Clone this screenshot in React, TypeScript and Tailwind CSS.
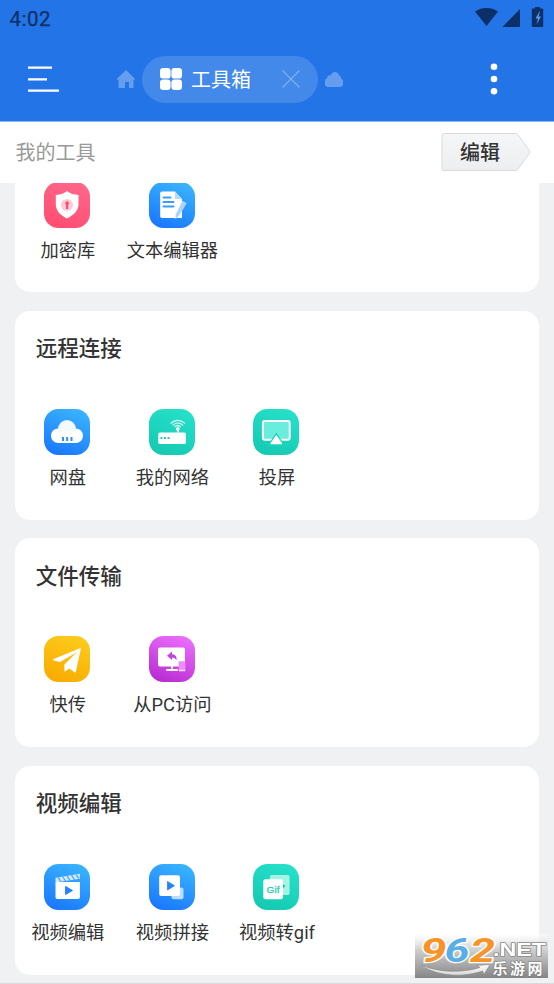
import type { ReactNode } from "react";

type IconName =
  | "vault" | "editor" | "drive" | "network" | "cast"
  | "send" | "pc" | "clip" | "join" | "gif";

const PALETTE: Record<string, [string, string]> = {
  blue: ["#39b3ff", "#1a78ff"],
  pink: ["#ff668a", "#ff4e72"],
  teal: ["#26e0ca", "#15c9b2"],
  yellow: ["#fccb1c", "#f9ab00"],
  purple: ["#ea6dfa", "#b82dd2"],
};

const ICONS: Record<IconName, { tone: string; art: ReactNode }> = {
  vault: {
    tone: "pink",
    art: (
      <>
        <path d="M23 9c3.600 2.800 6.600 3.700 11.500 3.900V22c0 6-3.500 10.300-11.500 14.500C15 32.300 11.800 28 11.800 22v-9.100C16.500 12.700 19.400 11.800 23 9z" fill="#fff" />
        <circle cx="23" cy="23" r="6" fill="#ffc9d6" />
        <path d="M22 27v-4.200a1.900 1.900 0 1 1 2.200 0V27z" fill="#f7507a" />
      </>
    ),
  },
  editor: {
    tone: "blue",
    art: (
      <>
        <path d="M13 9.500h13l7 7.500v19H13a1.800 1.800 0 0 1-1.800-1.800V11.300A1.800 1.800 0 0 1 13 9.500z" fill="#fff" />
        <path d="M26 9.500l7 7.500h-7z" fill="#b4daff" />
        <path d="M14.500 15.500h7M14.500 20h10M14.500 24.500h10" stroke="#3d9bf8" strokeWidth="2" strokeLinecap="round" />
        <path d="M33.200 19.200l4 2-7.600 13.200-3.200 2.100.2-4z" fill="#a7d2ff" stroke="#e4f2ff" strokeWidth=".5" />
      </>
    ),
  },
  drive: {
    tone: "blue",
    art: (
      <>
        <circle cx="23" cy="20" r="9" fill="#d9efff" />
        <rect x="7" y="19.500" width="32" height="14.500" rx="7.250" fill="#fff" />
        <path d="M14.200 22c.3-6.800 3.900-10.500 8.800-10.500S31.600 15 32 22z" fill="#f2faff" />
        <path d="M19 28v4M23.200 28v4M27.500 28v4" stroke="#2e90fc" strokeWidth="2" />
      </>
    ),
  },
  network: {
    tone: "teal",
    art: (
      <>
        <rect x="9.300" y="23.400" width="27.600" height="11.600" rx="1.500" fill="#fff" />
        <path d="M29 17.500v6" stroke="#fff" strokeWidth="1.800" />
        <rect x="27" y="18.500" width="3.500" height="3" rx="1" fill="#fff" />
        <path d="M11.500 29h2M15 29h2M18.500 29h2" stroke="#24cbb5" strokeWidth="1.800" />
        <path d="M22 14.200c4-3.900 9.700-3.900 13.500 0M24 16c2.900-2.600 6.800-2.600 9.600 0M26 17.700c1.600-1.400 3.900-1.400 5.500 0" fill="none" stroke="#d9fff7" strokeWidth="1.200" strokeLinecap="round" />
      </>
    ),
  },
  cast: {
    tone: "teal",
    art: (
      <>
        <rect x="9.900" y="12" width="26.800" height="18.800" rx="2" fill="#69eddd" stroke="#fff" strokeWidth="2" />
        <path d="M23.300 23.500L32 36.500H14.600z" fill="#20d3bd" />
        <path d="M23.300 27.200l5 7.300H18.300z" fill="#fff" stroke="#fff" strokeWidth="1.500" strokeLinejoin="round" />
      </>
    ),
  },
  send: {
    tone: "yellow",
    art: (
      <path d="M36 12.200c.6-.2 1 .2.800.8L31.900 35.600c-.1.800-.9 1-1.500.6l-5.100-3.600-3.800 2.700c-.6.4-1.100.1-1.100-.6v-6.300l12.400-12.100L16 25.900l-6.300-1.400c-.9-.3-.9-1.200 0-1.600z" fill="#fff" />
    ),
  },
  pc: {
    tone: "purple",
    art: (
      <>
        <rect x="9" y="11.500" width="27" height="19" rx="2" fill="#fff" />
        <path d="M23 30v3.500M18 34h10" stroke="#fff" strokeWidth="2" strokeLinecap="round" />
        <path d="M18 19.800l5-4.200v2.700c3.200 0 5 2.200 4.500 5.700-1.200-1.700-2.500-2.200-4.500-2.200V24z" fill="#bf45dc" />
        <rect x="29.600" y="25.300" width="6.800" height="10.200" rx=".8" fill="#ed8cfa" />
        <path d="M30 34.300h6" stroke="#fff" strokeWidth="1.300" strokeDasharray="1.600 .6" />
      </>
    ),
  },
  clip: {
    tone: "blue",
    art: (
      <>
        <path d="M11.500 18h24.400v15.200a1.700 1.700 0 0 1-1.700 1.700h-21a1.700 1.700 0 0 1-1.700-1.700z" fill="#fff" />
        <path d="M11.500 18.300V13.700l24.400-3.900v5L12.500 18.300" fill="#d2eaff" />
        <path d="M14 13.200l3 4.500M18.500 12.500l3 4.500M23 11.800l3 4.500M27.500 11.100l3 4.500M32 10.400l2.700 4" stroke="#4ba8ff" strokeWidth="1.300" />
        <path d="M21.600 22.500l6.800 4-6.800 4z" fill="#2185fc" stroke="#2185fc" strokeWidth="1" strokeLinejoin="round" />
      </>
    ),
  },
  join: {
    tone: "blue",
    art: (
      <>
        <rect x="22.500" y="23.500" width="12" height="11.700" rx="2" fill="#b9deff" />
        <rect x="10.200" y="11.200" width="20.800" height="20.800" rx="2" fill="#fff" />
        <path d="M18.500 17.500l7 4.200-7 4.300z" fill="#2383f5" stroke="#2383f5" strokeWidth=".8" strokeLinejoin="round" />
      </>
    ),
  },
  gif: {
    tone: "teal",
    art: (
      <>
        <rect x="16.800" y="11" width="19.800" height="20" rx="2" fill="#a5f3e5" />
        <path d="M29.700 20l2.800 2-2.800 2.400z" fill="#21bfaa" />
        <rect x="10.300" y="15.200" width="19.600" height="20" rx="2" fill="#fff" />
        <text x="13.500" y="28.500" fontSize="9.500" textLength="13" lengthAdjust="spacingAndGlyphs" fontFamily="'Liberation Sans', Arial, sans-serif" fill="#2dccb7" stroke="#2dccb7" strokeWidth=".3">Gif</text>
      </>
    ),
  },
};

function ToolIcon({ name }: { name: IconName }) {
  const { tone, art } = ICONS[name];
  const [from, to] = PALETTE[tone];
  const id = `bg-${name}`;
  return (
    <svg viewBox="0 0 46 46" className="block size-[46px] shrink-0">
      <defs>
        <linearGradient id={id} x1=".7" y1="0" x2=".3" y2="1">
          <stop offset="0" stopColor={from} />
          <stop offset="1" stopColor={to} />
        </linearGradient>
      </defs>
      <rect width="46" height="46" rx="14.500" fill={`url(#${id})`} />
      {art}
    </svg>
  );
}

type Tool = { icon: IconName; label: string };

function ToolGrid({ tools }: { tools: Tool[] }) {
  return (
    <div className="grid w-[523px] grid-cols-5">
      {tools.map((t) => (
        <div key={t.icon} className="flex flex-col items-center">
          <ToolIcon name={t.icon} />
          <span className="mt-[9px] pl-[1px] text-[18.3px] leading-7 whitespace-nowrap text-[#333]">{t.label}</span>
        </div>
      ))}
    </div>
  );
}

const SECTIONS: { title: string; tools: Tool[] }[] = [
  { title: "远程连接", tools: [{ icon: "drive", label: "网盘" }, { icon: "network", label: "我的网络" }, { icon: "cast", label: "投屏" }] },
  { title: "文件传输", tools: [{ icon: "send", label: "快传" }, { icon: "pc", label: "从PC访问" }] },
  { title: "视频编辑", tools: [{ icon: "clip", label: "视频编辑" }, { icon: "join", label: "视频拼接" }, { icon: "gif", label: "视频转gif" }] },
];

function StatusBar() {
  return (
    <div className="flex h-[38px] items-center justify-between pr-[9px] pl-[9.500px] text-[#0b2f66]">
      <span className="text-[20.500px] tracking-[.5px] [-webkit-text-stroke:.25px_#0b2f66]">4:02</span>
      <svg viewBox="0 0 70 22" className="mb-[2px] h-[22px] w-[70px]" fill="currentColor">
        <path d="M0 4.500c7-4.600 16-4.600 23 0L11.500 19z" />
        <path d="M45 2v18H27.500z" />
        <path d="M60 1.500V0h5v1.500h2.200c.6 0 1 .4 1 1V19c0 .6-.4 1-1 1h-9.400c-.6 0-1-.4-1-1V2.500c0-.6.400-1 1-1z" />
        <path d="M64.500 4.500l-4 7h2.500l-1.500 6 4.500-8h-2.500l1.500-5z" fill="#5b98f0" />
      </svg>
    </div>
  );
}

function TabBar() {
  return (
    <div className="flex h-[82px] items-center pl-7">
      <svg viewBox="0 0 31 28" className="h-7 w-[31px]" stroke="#fff" strokeWidth="2.200">
        <path d="M0 2.600h24M0 14.400h19M0 25.700h31" />
      </svg>
      <svg viewBox="0 0 18 18" className="ml-[58px] size-[18px]" fill="#659def">
        <path d="M9 0l9 8.700v1h-1.500V18h-4.500v-6H8v6H1.500V9.700H0v-1z" />
      </svg>
      <div className="ml-[7px] flex h-[47px] w-[176px] items-center rounded-full bg-[#4389e9] pr-[18px] pl-[18px]">
        <svg viewBox="0 0 22 22" className="size-[22px]" fill="#fff">
          <rect width="10.600" height="10.600" rx="3.200" />
          <rect x="11.400" width="10.600" height="10.600" rx="3.200" />
          <rect y="11.400" width="10.600" height="10.600" rx="3.200" />
          <rect x="11.400" y="11.400" width="10.600" height="10.600" rx="3.200" />
        </svg>
        <span className="ml-[9px] pt-[2px] text-[20px] leading-7 text-white">工具箱</span>
        <svg viewBox="0 0 18 18" className="ml-auto size-[18px]" stroke="#82b3f4" strokeWidth="1.300">
          <path d="M.6.600l16.800 16.800M17.400.600L.6 17.400" />
        </svg>
      </div>
      <svg viewBox="0 0 18 15" className="ml-[7px] h-[15px] w-[18px]" fill="#659def">
        <path d="M4.500 15A4.500 4.500 0 0 1 2 6.400C1.900 3.700 4 2.700 5.800 3.300 7.300-1 13-1 14 3.600c1.700.4 2.400 1.600 2.100 3.200A4.300 4.300 0 0 1 14 15z" />
      </svg>
      <svg viewBox="0 0 8 32" className="ml-[147px] h-8 w-2" fill="#fff">
        <circle cx="4" cy="3.700" r="3.300" />
        <circle cx="4" cy="16" r="3.300" />
        <circle cx="4" cy="28.200" r="3.300" />
      </svg>
    </div>
  );
}

function EditButton() {
  return (
    <button className="relative mr-[1px] h-[39px] w-[90px] pr-[12px] text-[20px] font-medium text-[#333]">
      <svg viewBox="0 0 90 39" className="absolute inset-0">
        <defs>
          <linearGradient id="edit-bg" x2="0" y2="1">
            <stop stopColor="#f5f6f8" />
            <stop offset="1" stopColor="#eceef0" />
          </linearGradient>
        </defs>
        <path d="M3 .500h71c1.500 0 2.300.5 3.200 1.500l11 15.300c.8 1.200.8 2.200 0 3.400l-11 15c-.9 1.200-1.700 1.800-3.200 1.800H3c-1.300 0-2-.7-2-2v-33c0-1.300.7-2 2-2z" fill="url(#edit-bg)" stroke="#d8dadc" />
      </svg>
      <span className="relative">编辑</span>
    </button>
  );
}

function Watermark() {
  return (
    <svg viewBox="0 -8 133 52" className="absolute right-[6px] bottom-[6px] h-[52px] w-[133px]">
      <defs>
        <linearGradient id="wm-bg" x2="0" y2="1">
          <stop stopColor="#fff" stopOpacity=".5" />
          <stop offset=".35" stopColor="#d0d0d0" />
          <stop offset="1" stopColor="#858585" />
        </linearGradient>
        <linearGradient id="wm-silver" x2="0" y2="1">
          <stop stopColor="#fff" />
          <stop offset="1" stopColor="#d8d8d8" />
        </linearGradient>
      </defs>
      <rect width="133" height="44" fill="url(#wm-bg)" />
      <g fontWeight="700" paintOrder="stroke" strokeLinejoin="round">
        <g fontFamily="Roboto, sans-serif" fontSize="33" fontStyle="italic" stroke="#fff" strokeWidth="2.500">
          <text x="5.500" y="28" textLength="26" lengthAdjust="spacingAndGlyphs" fill="#f79429">9</text>
          <text x="29.500" y="28" textLength="25" lengthAdjust="spacingAndGlyphs" fill="#5aaee6">6</text>
          <text x="55" y="28" textLength="25" lengthAdjust="spacingAndGlyphs" fill="#f79429">2</text>
        </g>
        <text x="78" y="21.500" fontSize="17.500" fontFamily="'Liberation Sans', Arial, sans-serif" textLength="53" lengthAdjust="spacingAndGlyphs" fill="#fff" stroke="#8a8a8a" strokeWidth="1.500">.NET</text>
        <text x="77.500" y="40" fontSize="15" fontFamily="'Liberation Sans', 'Noto Sans CJK SC', sans-serif" textLength="50" fill="#fff" stroke="#777" strokeWidth="1.200">乐游网</text>
      </g>
      <path d="M6 31c18 8 42 8 59 2.500l-3-2 13-1-6 10-1.500-3.500C49 43.500 23 43 6 31z" fill="url(#wm-silver)" stroke="#888" strokeWidth=".6" />
    </svg>
  );
}

export default function App() {
  return (
    <div className="relative flex h-[984px] w-[554px] flex-col overflow-hidden bg-[#eff1f3] font-[Roboto,'Noto_Sans_CJK_SC',sans-serif]">
      <header className="h-[122px] shrink-0 border-b border-[#8db8f3] bg-[#2374e6]">
        <StatusBar />
        <TabBar />
      </header>
      <div className="flex h-[61px] shrink-0 items-center justify-between bg-white pr-[22px] pl-[15.500px]">
        <span className="text-[20px] text-[#999]">我的工具</span>
        <EditButton />
      </div>
      <main className="flex min-h-0 flex-1 flex-col gap-[18.500px] overflow-hidden px-[15px]">
        <section className="h-[109px] shrink-0 rounded-b-[15px] bg-white">
          <div className="-mt-[1.500px]">
            <ToolGrid tools={[{ icon: "vault", label: "加密库" }, { icon: "editor", label: "文本编辑器" }]} />
          </div>
        </section>
        {SECTIONS.map((s) => (
          <section key={s.title} className="h-[209px] shrink-0 rounded-[15px] bg-white">
            <h2 className="h-[98px] pt-[22.800px] pl-[20.800px] text-[21.500px] leading-8 font-medium text-[#333]">{s.title}</h2>
            <ToolGrid tools={s.tools} />
          </section>
        ))}
      </main>
      <div className="h-px shrink-0 bg-[#d9dbdc]" />
      <Watermark />
    </div>
  );
}
